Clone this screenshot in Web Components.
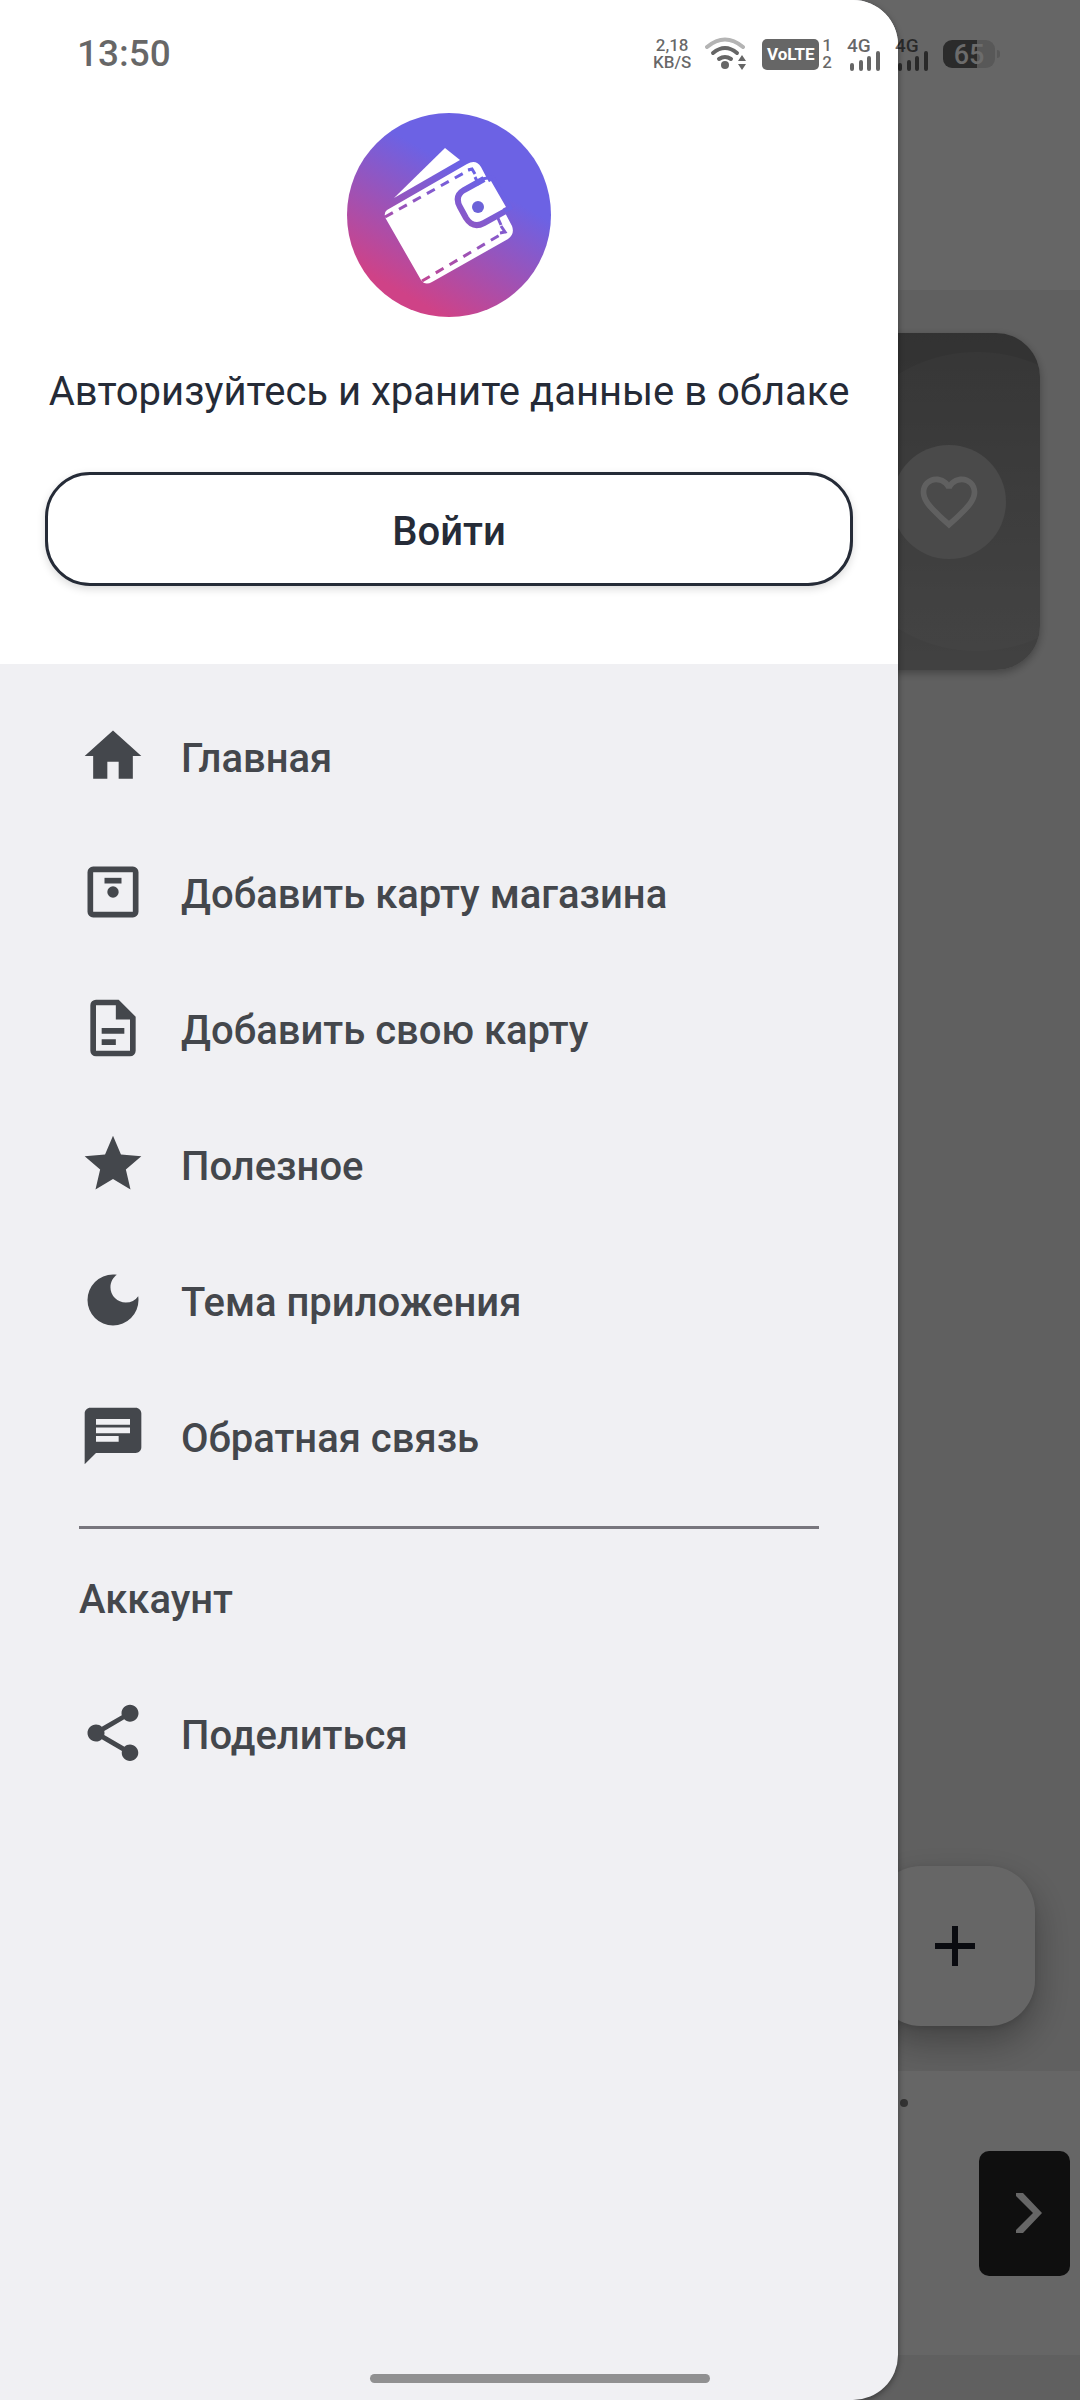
<!DOCTYPE html>
<html lang="ru">
<head>
<meta charset="utf-8">
<meta name="viewport" content="width=device-width, initial-scale=1">
<title>Кошелёк</title>
<style>
    body {
        margin: 0;
        font-family: Roboto, "Noto Sans", sans-serif;
        font-size: 40px;
        line-height: 48px;
        background: #f0f0f0;
    }
</style>
</head>
<body>
<wallet-app>
    <wallet-screen slot="screen"></wallet-screen>
    <side-drawer slot="drawer">
        <login-header slot="header">
            <span slot="title">Авторизуйтесь и храните данные в облаке</span>
            <span slot="action">Войти</span>
        </login-header>
        <menu-item icon="home">Главная</menu-item>
        <menu-item icon="shop">Добавить карту магазина</menu-item>
        <menu-item icon="file">Добавить свою карту</menu-item>
        <menu-item icon="star">Полезное</menu-item>
        <menu-item icon="moon">Тема приложения</menu-item>
        <menu-item icon="chat">Обратная связь</menu-item>
        <menu-group>
            <span slot="title">Аккаунт</span>
            <menu-item icon="share">Поделиться</menu-item>
        </menu-group>
    </side-drawer>
    <status-bar slot="status"></status-bar>
</wallet-app>

<script>
const icons = {
    home: `<path d="M10 20v-6h4v6h5v-8h3L12 3 2 12h3v8z"/>`,
    shop: `<path fill-rule="evenodd" d="M5 3h14a2 2 0 0 1 2 2v14a2 2 0 0 1-2 2H5a2 2 0 0 1-2-2V5a2 2 0 0 1 2-2zM5 5v14h14V5z"/><path d="M9 7h6v2H9z"/><circle cx="12" cy="12" r="2"/>`,
    file: `<path fill-rule="evenodd" d="M6 2h8l6 6v12a2 2 0 0 1-2 2H6a2 2 0 0 1-2-2V4a2 2 0 0 1 2-2zM6 4v16h12V9h-5V4z"/><path d="M8 12h8v2H8zM8 16h5v2H8z"/>`,
    star: `<path d="M12 17.27 18.18 21l-1.64-7.03L22 9.24l-7.19-.61L12 2 9.19 8.63 2 9.24l5.46 4.73L5.82 21z"/>`,
    moon: `<path d="M12 3a9 9 0 1 0 9 9c0-.46-.04-.92-.1-1.36a5.39 5.39 0 0 1-4.4 2.26 5.4 5.4 0 0 1-5.4-5.4c0-1.81.89-3.42 2.26-4.4C12.92 3.04 12.46 3 12 3z"/>`,
    chat: `<path d="M20 2H4c-1.1 0-1.99.9-1.99 2L2 22l4-4h14c1.1 0 2-.9 2-2V4c0-1.1-.9-2-2-2zM6 9h12v2H6V9zm8 5H6v-2h8v2zm4-6H6V6h12v2z"/>`,
    share: `<path d="M18 16.08c-.76 0-1.44.3-1.96.77L8.91 12.7c.05-.23.09-.46.09-.7s-.04-.47-.09-.7l7.05-4.11c.54.5 1.25.81 2.04.81 1.66 0 3-1.34 3-3s-1.34-3-3-3-3 1.34-3 3c0 .24.04.47.09.7L8.04 9.81C7.5 9.31 6.79 9 6 9c-1.66 0-3 1.34-3 3s1.34 3 3 3c.79 0 1.5-.31 2.04-.81l7.12 4.16c-.05.21-.08.43-.08.65 0 1.61 1.31 2.92 2.92 2.92s2.92-1.31 2.92-2.92-1.31-2.92-2.92-2.92z"/>`
}

class BaseElement extends HTMLElement {
    constructor() {
        super()
        this.attachShadow({ mode: "open" })
    }
    connectedCallback() {
        const template = document.createElement("template")
        template.innerHTML = `<style>${this.getStyles()}</style>${this.getTemplate()}`
        this.shadowRoot.replaceChildren(template.content.cloneNode(true))
    }
}

class WalletApp extends BaseElement {
    getTemplate() {
        return `
        <slot name="screen"></slot>
        <div class="scrim"></div>
        <slot name="drawer"></slot>
        <slot name="status"></slot>
        <div class="handle"></div>
        `
    }
    getStyles() {
        return `
        :host {
            display: grid;
            position: relative;
            min-height: 100vh;
            overflow: hidden;
        }
        .scrim {
            position: absolute;
            inset: 0;
            background: rgba(0, 0, 0, .6);
        }
        .handle {
            position: absolute;
            bottom: 17px;
            left: 50%;
            width: 340px;
            height: 9px;
            margin-left: -170px;
            border-radius: 5px;
            background: #909091;
        }
        `
    }
}
customElements.define("wallet-app", WalletApp)

class WalletScreen extends BaseElement {
    getTemplate() {
        return `
        <header></header>
        <main>
            <article>
                <button class="like" aria-label="В избранное">
                    <svg viewBox="0 0 24 24"><path d="M16.5 3c-1.74 0-3.41.81-4.5 2.09C10.91 3.81 9.24 3 7.5 3 4.42 3 2 5.42 2 8.5c0 3.78 3.4 6.86 8.55 11.54L12 21.35l1.45-1.32C18.6 15.36 22 12.28 22 8.5 22 5.42 19.58 3 16.5 3zm-4.4 15.55-.1.1-.1-.1C7.14 14.24 4 11.39 4 8.5 4 6.5 5.5 5 7.5 5c1.54 0 3.04.99 3.57 2.36h1.87C13.46 5.99 14.96 5 16.5 5c2 0 3.5 1.5 3.5 3.5 0 2.89-3.14 5.74-7.9 10.05z"/></svg>
                </button>
            </article>
            <button class="add" aria-label="Добавить">
                <svg viewBox="0 0 40 40"><path d="M17 0h6v17h17v6H23v17h-6V23H0v-6h17z"/></svg>
            </button>
        </main>
        <aside>
            <i></i>
            <button class="next" aria-label="Далее">
                <svg viewBox="0 0 26 40"><path d="M0 0h7l19 20L7 40H0v-3l17-17L0 3z"/></svg>
            </button>
        </aside>
        <footer></footer>
        `
    }
    getStyles() {
        return `
        :host {
            display: flex;
            flex-direction: column;
            min-height: 100vh;
            background: #f0f0f0;
        }
        button {
            display: grid;
            place-items: center;
            border: 0;
            padding: 0;
        }
        header {
            height: 290px;
            background: #fff;
        }
        main {
            flex: 1;
            display: flex;
            flex-direction: column;
            justify-content: space-between;
            padding: 43px 40px 45px;
        }
        article {
            display: flex;
            align-items: center;
            justify-content: flex-end;
            height: 337px;
            padding-right: 34px;
            box-sizing: border-box;
            border-radius: 44px;
            background:
                radial-gradient(circle 150px at calc(100% - 63px) 50%, rgba(255, 255, 255, .07) 149px, transparent 150px),
                linear-gradient(#7e7e7e, #a4a4a4);
            box-shadow: 0 3px 8px rgba(0, 0, 0, .3);
        }
        .like {
            width: 114px;
            height: 114px;
            border-radius: 50%;
            background: #b8b8b8;
        }
        .like svg {
            width: 68px;
            height: 68px;
            fill: #f0f0f0;
        }
        .add {
            align-self: flex-end;
            width: 160px;
            height: 160px;
            margin-right: 5px;
            border-radius: 46px;
            background: #fff;
            box-shadow: 0 16px 36px rgba(0, 0, 0, .3), 0 2px 6px rgba(0, 0, 0, .1);
        }
        .add svg {
            width: 40px;
            fill: #191d28;
        }
        aside {
            display: flex;
            align-items: center;
            justify-content: flex-end;
            gap: 71px;
            height: 284px;
            padding-right: 10px;
            background: #fff;
        }
        i {
            align-self: flex-start;
            width: 8px;
            height: 8px;
            margin-top: 28px;
            border-radius: 50%;
            background: #808080;
        }
        .next {
            width: 91px;
            height: 125px;
            border-radius: 10px;
            background: #272727;
        }
        .next svg {
            width: 26px;
            margin-left: 8px;
            fill: #fff;
        }
        footer {
            height: 45px;
        }
        `
    }
}
customElements.define("wallet-screen", WalletScreen)

class StatusBar extends BaseElement {
    getTemplate() {
        const signal = `
            <div class="signal">
                <span>4G</span>
                <svg viewBox="0 0 30 20"><path d="M2 14v4M11 11v7M19 7v11M28 2v16"/></svg>
            </div>`
        return `
        <time>13:50</time>
        <div class="small speed"><span>2,18</span><span>KB/S</span></div>
        <svg class="wifi" viewBox="0 0 42 34">
            <path class="faint" d="M2 10Q20-5 38 10"/>
            <path d="M8 16Q20 6 32 16M14 22Q20 18 26 22"/>
            <circle cx="20" cy="28" r="4"/>
            <path class="arrows" d="M33 24l4-6 4 6zM33 27l4 6 4-6z"/>
        </svg>
        <div class="volte">VoLTE</div>
        <div class="small sim"><span>1</span><span>2</span></div>
        ${signal}
        ${signal}
        <div class="battery"><b>65</b></div>
        `
    }
    getStyles() {
        return `
        :host {
            position: absolute;
            top: 0;
            left: 0;
            right: 0;
            display: flex;
            align-items: center;
            height: 108px;
            padding: 0 85px 0 77px;
            font-weight: 500;
            color: rgba(0, 0, 0, .6);
        }
        time {
            margin-right: auto;
            font-size: 37px;
        }
        .small {
            display: flex;
            flex-direction: column;
            align-items: center;
            font-size: 17px;
            line-height: 17px;
        }
        .speed {
            margin-right: 14px;
        }
        .wifi {
            width: 42px;
            height: 34px;
            margin-right: 15px;
            fill: none;
            stroke: #666;
            stroke-width: 4;
            stroke-linecap: round;
        }
        .wifi .faint {
            stroke: #b4b4b4;
        }
        .wifi circle, .wifi .arrows {
            fill: #666;
            stroke: none;
        }
        .volte {
            width: 57px;
            height: 31px;
            margin-right: 3px;
            border-radius: 5px;
            background: #666;
            color: #fff;
            font-size: 17px;
            line-height: 31px;
            font-weight: 700;
            text-align: center;
        }
        .sim {
            margin-right: 15px;
        }
        .signal {
            display: grid;
            width: 33px;
            height: 34px;
            margin-right: 15px;
            font-size: 19px;
            line-height: 18px;
        }
        .signal span, .signal svg {
            grid-area: 1 / 1;
        }
        .signal svg {
            align-self: end;
            justify-self: end;
            width: 30px;
            height: 20px;
            fill: none;
            stroke: currentColor;
            stroke-width: 4;
            stroke-linecap: round;
        }
        .battery {
            display: grid;
            place-items: center;
            position: relative;
            width: 52px;
            height: 28px;
            border-radius: 9px;
            background: linear-gradient(90deg, #2b2b2b 65%, #585858 65%);
            color: #6c6c6c;
        }
        .battery::after {
            content: "";
            position: absolute;
            left: 54px;
            top: 10px;
            width: 3px;
            height: 8px;
            border-radius: 0 3px 3px 0;
            background: #585858;
        }
        b {
            font-size: 27px;
            line-height: 30px;
            font-weight: 500;
        }
        `
    }
}
customElements.define("status-bar", StatusBar)

class SideDrawer extends BaseElement {
    getTemplate() {
        return `
        <slot name="header"></slot>
        <nav><slot></slot></nav>
        `
    }
    getStyles() {
        return `
        :host {
            position: absolute;
            top: 0;
            bottom: 0;
            left: 0;
            width: calc(100% - 182px);
            overflow: hidden;
            border-radius: 0 45px 45px 0;
            background: #f0f0f3;
            color: #44474c;
            box-shadow: 0 2px 6px rgba(0, 0, 0, .4);
        }
        nav {
            padding: 24px 79px;
        }
        `
    }
}
customElements.define("side-drawer", SideDrawer)

class LoginHeader extends BaseElement {
    getTemplate() {
        return `
        <svg viewBox="0 0 204 204" aria-hidden="true">
            <defs>
                <linearGradient id="fill" x1="55" y1="180" x2="122" y2="62" gradientUnits="userSpaceOnUse">
                    <stop offset="0" stop-color="#cf4287"/>
                    <stop offset="1" stop-color="#6c62e4"/>
                </linearGradient>
            </defs>
            <circle cx="102" cy="102" r="102" fill="url(#fill)"/>
            <path d="M47 85 98 35l15 12z" fill="#fff"/>
            <path d="M40 97 120 51Q129 46 134 54L165 113Q168 121 161 126L85 169Q78 173 74 167L39 106Q36 100 40 97z" fill="#fff"/>
            <g fill="none" stroke="url(#fill)" stroke-width="3">
                <path d="M38 104 124 56" stroke-dasharray="9 7"/>
                <path d="M75 168 158 119" stroke-dasharray="9 7"/>
                <path d="M121 57l4-1 3 5M128 64l4 8M150 103l4 9M154 113l4 6-5 1"/>
                <path d="M137 66 117 77Q107 83 113 94L119 105Q126 116 137 110L162 96" stroke-width="6"/>
            </g>
            <path d="M144 68 119 82Q113 86 117 93L123 103Q128 110 135 106L159 94z" fill="#fff"/>
            <path d="M135 66l11-2 18 31-6 3" fill="none" stroke="#6c62e4" stroke-width="3"/>
            <circle cx="131" cy="94" r="6" fill="#6c62d8"/>
        </svg>
        <p><slot name="title"></slot></p>
        <button><slot name="action"></slot></button>
        `
    }
    getStyles() {
        return `
        :host {
            display: flex;
            flex-direction: column;
            padding: 113px 45px 78px;
            background: #fff;
            color: #252b37;
        }
        svg {
            align-self: center;
            width: 204px;
            height: 204px;
        }
        p {
            margin: 51px 0 56px;
            text-align: center;
            white-space: nowrap;
        }
        button {
            height: 114px;
            padding-top: 6px;
            border: 3px solid #252b37;
            border-radius: 45px;
            background: #fff;
            color: inherit;
            font: inherit;
            font-weight: 500;
            box-shadow: 0 3px 8px rgba(0, 0, 0, .15);
        }
        `
    }
}
customElements.define("login-header", LoginHeader)

class MenuItem extends BaseElement {
    getTemplate() {
        return `
        <a href="#">
            <svg viewBox="0 0 24 24" aria-hidden="true">${icons[this.getAttribute("icon")]}</svg>
            <span><slot></slot></span>
        </a>
        `
    }
    getStyles() {
        return `
        :host {
            display: block;
        }
        a {
            display: flex;
            align-items: center;
            gap: 34px;
            height: 136px;
            color: inherit;
            font-weight: 500;
            text-decoration: none;
        }
        span {
            padding-top: 6px;
        }
        svg {
            flex: none;
            width: 68px;
            height: 68px;
            fill: currentColor;
        }
        `
    }
}
customElements.define("menu-item", MenuItem)

class MenuGroup extends BaseElement {
    getTemplate() {
        return `
        <hr>
        <h2><slot name="title"></slot></h2>
        <slot></slot>
        `
    }
    getStyles() {
        return `
        :host {
            display: block;
        }
        hr {
            height: 3px;
            margin: 22px 0 0;
            border: 0;
            background: #78767d;
        }
        h2 {
            margin: 0;
            padding-top: 6px;
            font-size: 40px;
            line-height: 130px;
            font-weight: 500;
        }
        `
    }
}
customElements.define("menu-group", MenuGroup)
</script>
</body>
</html>
